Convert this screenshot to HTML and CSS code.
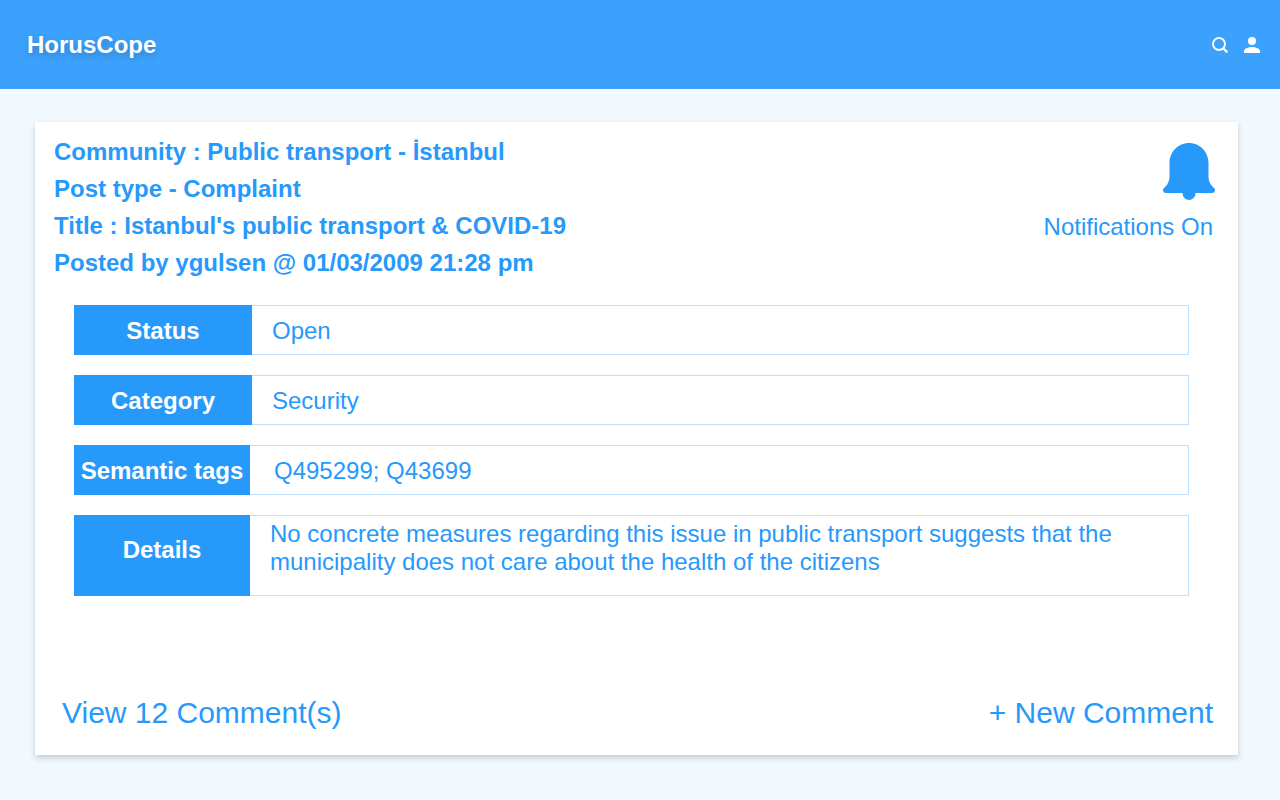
FILE: index.html
```html
<!DOCTYPE html>
<html lang="en">
<head>
<meta charset="utf-8">
<meta name="viewport" content="width=device-width, initial-scale=1">
<title>HorusCope</title>
<link rel="stylesheet" href="styles.css">
</head>
<body>
<header class="topbar">
  <a class="brand" href="#">HorusCope</a>
  <nav class="actions" aria-label="Main">
    <button class="icon-button" type="button" aria-label="Search">
      <svg viewBox="0 0 16 16" width="16" height="16" fill="none" stroke="currentColor" stroke-width="1.9"><circle cx="7" cy="7" r="6"/><path d="M11.2 11.2 15.4 15.4" stroke-width="2.2"/></svg>
    </button>
    <button class="icon-button" type="button" aria-label="Profile">
      <svg viewBox="0 0 16 16" width="16" height="16" fill="currentColor"><circle cx="8" cy="4" r="4"/><path d="M8 10c-2.700 0-8 1.300-8 4v2h16v-2c0-2.700-5.300-4-8-4z"/></svg>
    </button>
  </nav>
</header>
<main class="card">
  <div class="post-head">
    <div class="post-meta">
      <p>Community : Public transport - İstanbul</p>
      <p>Post type - Complaint</p>
      <h1>Title : Istanbul's public transport &amp; COVID-19</h1>
      <p>Posted by ygulsen @ 01/03/2009 21:28 pm</p>
    </div>
    <button class="notify" type="button">
      <svg class="bell" viewBox="0 0 52 57" width="52" height="57" fill="currentColor" aria-hidden="true"><path d="M26 0C15 0 6.500 9 6.500 20v13c0 5-1.500 8-5 11.500C.5 45.500 0 46 0 47c0 1.800 1.300 3 3 3h46c1.700 0 3-1.200 3-3 0-1-.5-1.500-1.500-2.500-3.500-3.500-5-6.500-5-11.500V20C45.500 9 37 0 26 0z"/><path d="M19.500 49.500v1a6.500 6.500 0 0 0 13 0v-1z"/></svg>
      <span>Notifications On</span>
    </button>
  </div>
  <dl class="fields">
    <div class="field"><dt>Status</dt><dd>Open</dd></div>
    <div class="field"><dt>Category</dt><dd>Security</dd></div>
    <div class="field field-narrow"><dt>Semantic tags</dt><dd class="tags">Q495299; Q43699</dd></div>
    <div class="field field-narrow field-tall"><dt>Details</dt><dd>No concrete measures regarding this issue in public transport suggests that the municipality does not care about the health of the citizens</dd></div>
  </dl>
  <footer class="card-foot">
    <a href="#">View 12 Comment(s)</a>
    <a href="#">+ New Comment</a>
  </footer>
</main>
</body>
</html>
```
FILE: styles.css
```css
:root {
  --blue: #2699fb;
  --line: #bce0fd;
}

* { box-sizing: border-box; }

body {
  margin: 0;
  min-height: 100vh;
  display: flex;
  flex-direction: column;
  background: #f1f9ff;
  color: var(--blue);
  font: 24px/28px "Liberation Sans", Arial, sans-serif;
}

a { color: inherit; text-decoration: none; }

button {
  padding: 0;
  border: 0;
  background: none;
  color: inherit;
  font: inherit;
  cursor: pointer;
}

svg { display: block; }

.topbar {
  display: flex;
  align-items: center;
  justify-content: space-between;
  padding: 29px 20px 28px 27px;
  background: #3ca1fc;
  color: #fff;
}

.brand {
  line-height: 32px;
  font-weight: bold;
  text-shadow: 0 3px 6px rgba(0, 0, 0, 0.2);
}

.actions { display: flex; gap: 16px; }

.card {
  flex: 1;
  display: flex;
  flex-direction: column;
  margin: 33px 42px 45px 35px;
  padding: 11px 25px 22px 19px;
  background: #fff;
  box-shadow: 0 3px 6px rgba(0, 0, 0, 0.18);
}

.post-head {
  display: flex;
  justify-content: space-between;
  align-items: flex-start;
}

.post-meta p,
.post-meta h1 {
  margin: 0;
  font-size: 24px;
  font-weight: bold;
  line-height: 37px;
}

.notify {
  display: flex;
  flex-direction: column;
  gap: 13px;
  margin-top: 10px;
}

.bell { align-self: flex-end; margin-right: -2px; }

.fields {
  display: flex;
  flex-direction: column;
  gap: 20px;
  margin: 24px 24px 0 20px;
}

.field {
  display: grid;
  grid-template-columns: 178px 1fr;
  min-height: 50px;
}

.field-narrow { grid-template-columns: 176px 1fr; }

.field dt {
  display: flex;
  align-items: center;
  justify-content: center;
  padding-top: 2px;
  background: var(--blue);
  color: #fff;
  font-weight: bold;
}

.field dd {
  display: flex;
  align-items: center;
  margin: 0;
  padding: 2px 20px 0;
  border: 1px solid var(--line);
  border-left: 0;
}

.field .tags { padding-left: 24px; }

.field-tall { min-height: 81px; }
.field-tall dt { padding-bottom: 14px; }
.field-tall dd { align-items: flex-start; padding-top: 4px; }

.card-foot {
  display: flex;
  justify-content: space-between;
  margin-top: auto;
  padding-left: 8px;
  font-size: 30px;
  line-height: 40px;
}
```
